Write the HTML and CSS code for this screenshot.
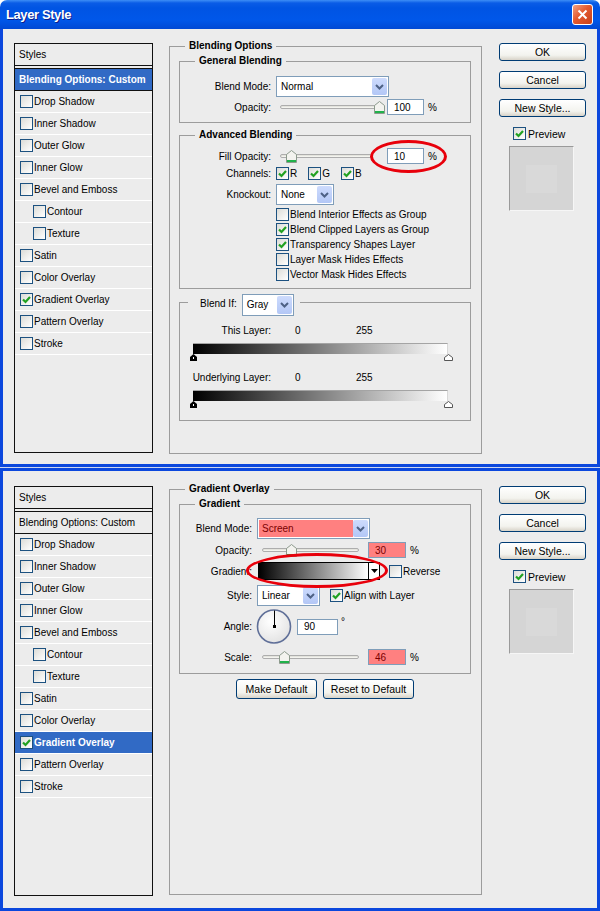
FILE: index.html
```html
<!DOCTYPE html>
<html lang="en">
<head>
  <meta charset="UTF-8">
  <meta name="viewport" content="width=device-width, initial-scale=1.0">
  <title>Layer Style</title>
  <link rel="stylesheet" href="styles.css">
</head>
<body>
  <div class="titlebar">
    <span class="title">Layer Style</span>
    <span class="close">
      <svg width="11" height="11" viewBox="0 0 11 11"><path d="M1.5 1.5 L9.5 9.5 M9.5 1.5 L1.5 9.5" stroke="#fff" stroke-width="2"/></svg>
    </span>
  </div>

  <!-- Blending options page -->
  <div class="frame top">
    <ul class="styles">
      <li class="head">Styles</li>
      <li class="blend sel">Blending Options: Custom</li>
      <li><i class="cb"></i>Drop Shadow</li>
      <li><i class="cb"></i>Inner Shadow</li>
      <li><i class="cb"></i>Outer Glow</li>
      <li><i class="cb"></i>Inner Glow</li>
      <li><i class="cb"></i>Bevel and Emboss</li>
      <li class="sub"><i class="cb"></i>Contour</li>
      <li class="sub"><i class="cb"></i>Texture</li>
      <li><i class="cb"></i>Satin</li>
      <li><i class="cb"></i>Color Overlay</li>
      <li><i class="cb"><svg width="11" height="11" viewBox="0 0 11 11"><path d="M2 5.5 L4.5 8 L9 3" fill="none" stroke="#21a121" stroke-width="2.2"/></svg></i>Gradient Overlay</li>
      <li><i class="cb"></i>Pattern Overlay</li>
      <li><i class="cb"></i>Stroke</li>
    </ul>

    <div class="main">
      <fieldset class="panel">
        <legend>Blending Options</legend>

        <fieldset class="group general">
          <legend>General Blending</legend>
          <div class="row h21">
            <span class="lbl">Blend Mode:</span>
            <div class="combo mode"><span>Normal</span><b class="drop"><svg width="9" height="6" viewBox="0 0 9 6"><path d="M1 1 L4.5 4.5 L8 1" fill="none" stroke="#4d6185" stroke-width="2"/></svg></b></div>
          </div>
          <div class="row h16 mt2">
            <span class="lbl">Opacity:</span>
            <div class="slider s98"><span class="track"></span><i class="thumb" style="left: 94px"><svg width="11" height="13" viewBox="0 0 11 13"><path d="M0.5 4.5 L5.5 0.5 L10.5 4.5 V12.5 H0.5 Z" fill="#f3f3ef" stroke="#8c9a8c"/><rect x="1" y="10" width="9" height="2" fill="#21b24b"/></svg></i></div>
            <span class="num n9">100</span><span class="unit">%</span>
          </div>
        </fieldset>

        <fieldset class="group advanced">
          <legend>Advanced Blending</legend>
          <div class="row h16">
            <span class="lbl">Fill Opacity:</span>
            <div class="slider s92"><span class="track"></span><i class="thumb" style="left: 6px"><svg width="11" height="13" viewBox="0 0 11 13"><path d="M0.5 4.5 L5.5 0.5 L10.5 4.5 V12.5 H0.5 Z" fill="#f3f3ef" stroke="#8c9a8c"/><rect x="1" y="10" width="9" height="2" fill="#21b24b"/></svg></i></div>
            <span class="num n15">10</span><span class="unit">%</span>
          </div>
          <div class="row h16 mt1">
            <span class="lbl">Channels:</span>
            <span class="chk ch"><i class="cb"><svg width="11" height="11" viewBox="0 0 11 11"><path d="M2 5.5 L4.5 8 L9 3" fill="none" stroke="#21a121" stroke-width="2.2"/></svg></i>R</span>
            <span class="chk ch"><i class="cb"><svg width="11" height="11" viewBox="0 0 11 11"><path d="M2 5.5 L4.5 8 L9 3" fill="none" stroke="#21a121" stroke-width="2.2"/></svg></i>G</span>
            <span class="chk ch"><i class="cb"><svg width="11" height="11" viewBox="0 0 11 11"><path d="M2 5.5 L4.5 8 L9 3" fill="none" stroke="#21a121" stroke-width="2.2"/></svg></i>B</span>
          </div>
          <div class="row h21 mt3">
            <span class="lbl">Knockout:</span>
            <div class="combo knock"><span>None</span><b class="drop"><svg width="9" height="6" viewBox="0 0 9 6"><path d="M1 1 L4.5 4.5 L8 1" fill="none" stroke="#4d6185" stroke-width="2"/></svg></b></div>
          </div>
          <div class="checks">
            <span class="chk"><i class="cb"></i>Blend Interior Effects as Group</span>
            <span class="chk"><i class="cb"><svg width="11" height="11" viewBox="0 0 11 11"><path d="M2 5.5 L4.5 8 L9 3" fill="none" stroke="#21a121" stroke-width="2.2"/></svg></i>Blend Clipped Layers as Group</span>
            <span class="chk"><i class="cb"><svg width="11" height="11" viewBox="0 0 11 11"><path d="M2 5.5 L4.5 8 L9 3" fill="none" stroke="#21a121" stroke-width="2.2"/></svg></i>Transparency Shapes Layer</span>
            <span class="chk"><i class="cb"></i>Layer Mask Hides Effects</span>
            <span class="chk"><i class="cb"></i>Vector Mask Hides Effects</span>
          </div>
        </fieldset>

        <fieldset class="group blendif">
          <legend>
            <span class="bi-label">Blend If:</span>
            <div class="combo gray"><span>Gray</span><b class="drop"><svg width="9" height="6" viewBox="0 0 9 6"><path d="M1 1 L4.5 4.5 L8 1" fill="none" stroke="#4d6185" stroke-width="2"/></svg></b></div>
          </legend>
          <div class="row vals">
            <span class="lbl">This Layer:</span><span class="v0">0</span><span>255</span>
          </div>
          <div class="ramp">
            <span class="bar"></span>
            <div class="marks">
              <svg width="7" height="7" viewBox="0 0 7 7"><path d="M3.5 0 L7 3 V7 H0 V3 Z" fill="#000"/><rect x="3" y="3" width="1" height="2" fill="#fff"/></svg>
              <svg width="9" height="7" viewBox="0 0 9 7"><path d="M4.5 0.5 L8.5 3.5 V6.5 H0.5 V3.5 Z" fill="#fff" stroke="#555"/></svg>
            </div>
          </div>
          <div class="row vals mt10">
            <span class="lbl">Underlying Layer:</span><span class="v0">0</span><span>255</span>
          </div>
          <div class="ramp">
            <span class="bar"></span>
            <div class="marks">
              <svg width="7" height="7" viewBox="0 0 7 7"><path d="M3.5 0 L7 3 V7 H0 V3 Z" fill="#000"/><rect x="3" y="3" width="1" height="2" fill="#fff"/></svg>
              <svg width="9" height="7" viewBox="0 0 9 7"><path d="M4.5 0.5 L8.5 3.5 V6.5 H0.5 V3.5 Z" fill="#fff" stroke="#555"/></svg>
            </div>
          </div>
        </fieldset>
      </fieldset>
      <span class="ring ring-fill"></span>
    </div>

    <div class="side">
      <span class="btn">OK</span>
      <span class="btn">Cancel</span>
      <span class="btn">New Style...</span>
      <span class="preview"><i class="cb"><svg width="11" height="11" viewBox="0 0 11 11"><path d="M2 5.5 L4.5 8 L9 3" fill="none" stroke="#21a121" stroke-width="2.2"/></svg></i>Preview</span>
      <div class="thumbnail"><span></span></div>
    </div>
  </div>

  <div class="split"></div>

  <!-- Gradient overlay page -->
  <div class="frame bottom">
    <ul class="styles">
      <li class="head">Styles</li>
      <li class="blend">Blending Options: Custom</li>
      <li><i class="cb"></i>Drop Shadow</li>
      <li><i class="cb"></i>Inner Shadow</li>
      <li><i class="cb"></i>Outer Glow</li>
      <li><i class="cb"></i>Inner Glow</li>
      <li><i class="cb"></i>Bevel and Emboss</li>
      <li class="sub"><i class="cb"></i>Contour</li>
      <li class="sub"><i class="cb"></i>Texture</li>
      <li><i class="cb"></i>Satin</li>
      <li><i class="cb"></i>Color Overlay</li>
      <li class="sel"><i class="cb"><svg width="11" height="11" viewBox="0 0 11 11"><path d="M2 5.5 L4.5 8 L9 3" fill="none" stroke="#21a121" stroke-width="2.2"/></svg></i>Gradient Overlay</li>
      <li><i class="cb"></i>Pattern Overlay</li>
      <li><i class="cb"></i>Stroke</li>
    </ul>

    <div class="main">
      <fieldset class="panel">
        <legend>Gradient Overlay</legend>

        <fieldset class="group gradient">
          <legend>Gradient</legend>
          <div class="row h21">
            <span class="lbl">Blend Mode:</span>
            <div class="combo mode red"><span>Screen</span><b class="drop"><svg width="9" height="6" viewBox="0 0 9 6"><path d="M1 1 L4.5 4.5 L8 1" fill="none" stroke="#4d6185" stroke-width="2"/></svg></b></div>
          </div>
          <div class="row h16 mt3">
            <span class="lbl">Opacity:</span>
            <div class="slider s97"><span class="track"></span><i class="thumb" style="left: 24px"><svg width="11" height="13" viewBox="0 0 11 13"><path d="M0.5 4.5 L5.5 0.5 L10.5 4.5 V12.5 H0.5 Z" fill="#f3f3ef" stroke="#8c9a8c"/><rect x="1" y="10" width="9" height="2" fill="#21b24b"/></svg></i></div>
            <span class="num n9 red">30</span><span class="unit">%</span>
          </div>
          <div class="row h18 mt4">
            <span class="lbl">Gradient:</span>
            <div class="swatch"><span class="ramp-fill"></span><span class="arrow"><svg width="7" height="4" viewBox="0 0 7 4"><path d="M0 0 H7 L3.5 4 Z" fill="#000"/></svg></span></div>
            <span class="chk rev"><i class="cb"></i>Reverse</span>
          </div>
          <div class="row h21 mt5">
            <span class="lbl">Style:</span>
            <div class="combo style"><span>Linear</span><b class="drop"><svg width="9" height="6" viewBox="0 0 9 6"><path d="M1 1 L4.5 4.5 L8 1" fill="none" stroke="#4d6185" stroke-width="2"/></svg></b></div>
            <span class="chk align"><i class="cb"><svg width="11" height="11" viewBox="0 0 11 11"><path d="M2 5.5 L4.5 8 L9 3" fill="none" stroke="#21a121" stroke-width="2.2"/></svg></i>Align with Layer</span>
          </div>
          <div class="row h35 mt3">
            <span class="lbl">Angle:</span>
            <svg class="dial" width="36" height="35" viewBox="0 0 36 35">
              <defs>
                <radialGradient id="dialFill" cx="40%" cy="35%" r="70%">
                  <stop offset="0" stop-color="#ffffff"/>
                  <stop offset="1" stop-color="#e2e2e2"/>
                </radialGradient>
              </defs>
              <circle cx="18" cy="17.5" r="16.5" fill="url(#dialFill)" stroke="#5f6f98" stroke-width="1.6"/>
              <line x1="18.5" y1="17.5" x2="18.5" y2="1.5" stroke="#000"/>
              <rect x="17" y="16" width="3" height="3" fill="#000"/>
            </svg>
            <span class="num angle">90</span><span class="deg">°</span>
          </div>
          <div class="row h16 mt5">
            <span class="lbl">Scale:</span>
            <div class="slider s97"><span class="track"></span><i class="thumb" style="left: 17px"><svg width="11" height="13" viewBox="0 0 11 13"><path d="M0.5 4.5 L5.5 0.5 L10.5 4.5 V12.5 H0.5 Z" fill="#f3f3ef" stroke="#8c9a8c"/><rect x="1" y="10" width="9" height="2" fill="#21b24b"/></svg></i></div>
            <span class="num n9 red">46</span><span class="unit">%</span>
          </div>
        </fieldset>

        <div class="defaults">
          <span class="btn wide81">Make Default</span>
          <span class="btn wide91">Reset to Default</span>
        </div>
      </fieldset>
      <span class="ring ring-grad"></span>
    </div>

    <div class="side">
      <span class="btn">OK</span>
      <span class="btn">Cancel</span>
      <span class="btn">New Style...</span>
      <span class="preview"><i class="cb"><svg width="11" height="11" viewBox="0 0 11 11"><path d="M2 5.5 L4.5 8 L9 3" fill="none" stroke="#21a121" stroke-width="2.2"/></svg></i>Preview</span>
      <div class="thumbnail"><span></span></div>
    </div>
  </div>
</body>
</html>
```

FILE: styles.css
```css
* {
  box-sizing: border-box;
}
body {
  margin: 0;
  width: 600px;
  height: 911px;
  overflow: hidden;
  background: #fff;
  font-family: "Liberation Sans", Arial, sans-serif;
  font-size: 10px;
  color: #000;
}

/* window chrome */
.titlebar {
  height: 29px;
  display: flex;
  align-items: center;
  justify-content: space-between;
  padding: 0 7px 0 6px;
  border-radius: 7px 7px 0 0;
  background: linear-gradient(#3d8ef6 0, #0a5ce6 3px, #0054e3 8px, #0057e9 20px, #0049d4 29px);
}
.title {
  color: #fff;
  font-weight: bold;
  font-size: 13px;
  letter-spacing: -0.4px;
  text-shadow: 1px 1px 0 #0f1f8a;
}
.close {
  width: 21px;
  height: 21px;
  display: flex;
  align-items: center;
  justify-content: center;
  border: 1px solid #fff;
  border-radius: 3px;
  background: linear-gradient(135deg, #f2a283, #e3592f 45%, #c6401b);
}
.frame {
  display: flex;
  align-items: flex-start;
  background: #ececec;
  border: 3px solid #0b47dd;
  padding: 11px 0 0 11px;
}
.frame.top {
  border-top: 0;
  height: 438px;
}
.frame.bottom {
  height: 443px;
  padding-top: 12px;
}
.split {
  height: 1px;
  background: #cfd7ee;
}

/* styles list */
.styles {
  list-style: none;
  margin: 3px 0 0;
  padding: 0;
  width: 139px;
  height: 410px;
  border: 1px solid #111;
  background: #ececec;
}
.styles li {
  display: flex;
  align-items: center;
  gap: 1px;
  height: 22px;
  padding-left: 5px;
  border-bottom: 1px solid #fff;
}
.styles li.sub {
  padding-left: 18px;
}
.styles .head {
  height: 22px;
  padding-left: 4px;
  border-bottom: 1px solid #111;
}
.styles .blend {
  height: 23px;
  margin-top: 2px;
  padding-left: 4px;
  border-top: 1px solid #111;
  border-bottom: 1px solid #111;
}
.styles .sel {
  background: #316ac5;
  color: #fff;
  font-weight: bold;
}

/* checkbox */
.cb {
  width: 13px;
  height: 13px;
  flex: none;
  display: flex;
  align-items: center;
  justify-content: center;
  border: 1px solid #1c5180;
  background: linear-gradient(135deg, #dcdcd7, #fff);
}
.chk {
  display: flex;
  align-items: center;
  gap: 1px;
  height: 15px;
}

/* middle panel */
.main {
  position: relative;
  width: 313px;
  margin-left: 16px;
}
fieldset {
  margin: 0;
  padding: 0;
  min-width: 0;
  border: 1px solid #9c9c9c;
}
legend {
  padding: 0 4px;
  font-weight: bold;
  line-height: 12px;
}
.panel {
  height: 414px;
  padding: 3px 10px 0 9px;
}
.bottom .panel {
  height: 412px;
}
.panel > legend {
  margin-left: 6px;
}
.group > legend {
  margin-left: 15px;
}
.general {
  padding: 9px 0 7px;
}
.advanced {
  margin-top: 6px;
  padding: 7px 0 6px;
}
.blendif {
  margin-top: 5px;
  padding: 14px 0 12px;
}
/* the combo hangs below the legend so the frame line meets it near the top */
.blendif > legend {
  display: flex;
  align-items: flex-start;
  gap: 5px;
  height: 16px;
  margin-left: 8px;
  padding: 0 6px 0 12px;
  font-weight: normal;
}
.bi-label {
  line-height: 20px;
}
.gradient {
  padding: 8px 0 8px;
}

.row {
  display: flex;
  align-items: center;
}
.h16 { height: 16px; }
.h18 { height: 18px; }
.h21 { height: 21px; }
.h35 { height: 35px; }
.mt1 { margin-top: 1px; }
.mt2 { margin-top: 2px; }
.mt3 { margin-top: 3px; }
.mt4 { margin-top: 4px; }
.mt5 { margin-top: 5px; }
.mt10 { margin-top: 10px; }

.lbl {
  width: 91px;
  margin-right: 5px;
  text-align: right;
}
.gradient .lbl {
  width: 72px;
}

/* combo box */
.combo {
  display: flex;
  align-items: stretch;
  height: 21px;
  padding: 1px;
  border: 1px solid #7f9db9;
  background: #fff;
}
.combo span {
  flex: 1;
  display: flex;
  align-items: center;
  padding-left: 3px;
}
.combo .drop {
  width: 15px;
  display: flex;
  align-items: center;
  justify-content: center;
  border-radius: 2px;
  background: linear-gradient(#cddbfd, #b3c7f6);
}
.combo.mode { width: 113px; }
.combo.knock { width: 58px; }
.combo.gray { width: 52px; height: 22px; flex: none; }
.combo.style { width: 63px; }
.combo.red span {
  background: #ff8080;
  color: #7a0000;
}

/* slider */
.slider {
  position: relative;
  display: flex;
  align-items: center;
  height: 16px;
  margin-left: 4px;
}
.slider .track {
  flex: 1;
  height: 4px;
  border: 1px solid #adadad;
  border-radius: 2px;
  background: linear-gradient(#dcdcd4, #fbfbf8);
}
.slider .thumb {
  position: absolute;
  top: 2px;
  display: flex;
}
.s98 { width: 98px; }
.s92 { width: 92px; }
.s97 { width: 97px; margin-left: 5px; }

/* numeric field */
.num {
  display: flex;
  align-items: center;
  width: 37px;
  height: 16px;
  padding-left: 6px;
  border: 1px solid #7f9db9;
  background: #fff;
}
.num.n9 { margin-left: 9px; }
.num.n15 { margin-left: 15px; }
.gradient .num.n9 { width: 38px; }
.num.red {
  background: #ff8080;
  color: #7a0000;
}
.unit {
  margin-left: 4px;
}

.ch {
  margin-right: 11px;
}
.checks {
  margin-top: 2px;
  padding-left: 96px;
}

/* blend if ramps */
.vals {
  height: 12px;
}
.v0 {
  width: 61px;
  margin-left: 19px;
}
.ramp {
  width: 263px;
  margin: 7px 0 0 10px;
}
.ramp .bar {
  display: block;
  width: 255px;
  height: 11px;
  margin-left: 3px;
  border-top: 1px solid #a4a4a4;
  border-right: 1px solid #d8d8d8;
  background: linear-gradient(to right, #000, #fff);
}
.ramp .marks {
  display: flex;
  justify-content: space-between;
  align-items: flex-end;
  height: 7px;
}
.ramp .marks svg {
  display: block;
}

/* gradient overlay controls */
.swatch {
  display: flex;
  width: 122px;
  height: 18px;
  margin-left: 1px;
  border: 1px solid #000;
  background: #fff;
}
.ramp-fill {
  flex: 1;
  background: linear-gradient(to right, #000, #fff);
}
.swatch .arrow {
  width: 11px;
  display: flex;
  align-items: center;
  justify-content: center;
  border-left: 1px solid #000;
}
.rev {
  margin-left: 9px;
}
.align {
  margin-left: 10px;
}
.dial {
  display: block;
  margin-left: -1px;
}
.num.angle {
  width: 41px;
  margin-left: 5px;
}
.deg {
  align-self: flex-start;
  margin: 7px 0 0 3px;
}
.defaults {
  display: flex;
  justify-content: center;
  gap: 6px;
  margin-top: 5px;
}

/* buttons */
.btn {
  display: flex;
  align-items: center;
  justify-content: center;
  width: 87px;
  height: 18px;
  border: 1px solid #003c74;
  border-radius: 3px;
  background: linear-gradient(#ffffff, #f3f3ee 70%, #d8d3c8);
  font-size: 10.5px;
}
.defaults .btn {
  height: 20px;
}
.btn.wide81 { width: 81px; }
.btn.wide91 { width: 91px; }

/* right column */
.side {
  width: 87px;
  margin: 3px 0 0 17px;
  display: flex;
  flex-direction: column;
  gap: 10px;
}
.preview {
  display: flex;
  align-items: center;
  gap: 2px;
  margin-left: 14px;
  font-size: 10.5px;
}
.thumbnail {
  display: flex;
  align-items: center;
  justify-content: center;
  width: 65px;
  height: 65px;
  margin: -4px 0 0 10px;
  border-top: 1px solid #9a9a9a;
  border-left: 1px solid #9a9a9a;
  border-right: 1px solid #f6f6f6;
  border-bottom: 1px solid #f6f6f6;
  background: #d5d5d5;
}
.thumbnail span {
  width: 31px;
  height: 28px;
  background: #d9d9d9;
}

/* red hand-drawn marks */
.ring {
  position: absolute;
  border: 3px solid #e8000b;
  border-radius: 50%;
}
.ring-fill {
  left: 201px;
  top: 100px;
  width: 77px;
  height: 33px;
}
.ring-grad {
  left: 77px;
  top: 70px;
  width: 142px;
  height: 35px;
}
```
